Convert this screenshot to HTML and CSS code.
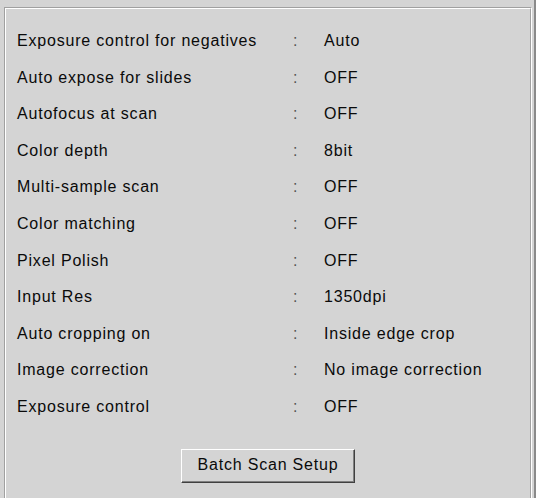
FILE: index.html
```html
<!DOCTYPE html>
<html>
<head>
<meta charset="utf-8">
<link rel="stylesheet" href="styles.css">
</head>
<body>
<div class="window">
  <div class="frame">
    <div class="frame-inner">
      <div class="rows">
        <div class="row"><span class="label">Exposure control for negatives</span><span class="colon">:</span><span class="value">Auto</span></div>
        <div class="row"><span class="label">Auto expose for slides</span><span class="colon">:</span><span class="value">OFF</span></div>
        <div class="row"><span class="label">Autofocus at scan</span><span class="colon">:</span><span class="value">OFF</span></div>
        <div class="row"><span class="label">Color depth</span><span class="colon">:</span><span class="value">8bit</span></div>
        <div class="row"><span class="label">Multi-sample scan</span><span class="colon">:</span><span class="value">OFF</span></div>
        <div class="row"><span class="label">Color matching</span><span class="colon">:</span><span class="value">OFF</span></div>
        <div class="row"><span class="label">Pixel Polish</span><span class="colon">:</span><span class="value">OFF</span></div>
        <div class="row"><span class="label">Input Res</span><span class="colon">:</span><span class="value">1350dpi</span></div>
        <div class="row"><span class="label">Auto cropping on</span><span class="colon">:</span><span class="value">Inside edge crop</span></div>
        <div class="row"><span class="label">Image correction</span><span class="colon">:</span><span class="value">No image correction</span></div>
        <div class="row"><span class="label">Exposure control</span><span class="colon">:</span><span class="value">OFF</span></div>
      </div>
      <div class="actions">
        <button class="btn" type="button">Batch Scan Setup</button>
      </div>
    </div>
  </div>
  <div class="edge"></div>
</div>
</body>
</html>
```

FILE: styles.css
```css
html, body {
  margin: 0;
  padding: 0;
  background: #d4d4d4;
  overflow: hidden;
}

body {
  font-family: "Liberation Sans", Arial, sans-serif;
  font-size: 16px;
  letter-spacing: 0.8px;
  color: #0a0a0a;
}

.window {
  display: flex;
  height: 498px;
  width: 537px;
}

.frame {
  margin: 7px 0 0 4px;
  width: 528px;
  height: 491px;
  box-sizing: border-box;
  border-top: 1px solid #a0a0a0;
  border-left: 1px solid #a0a0a0;
  border-right: 1px solid #ffffff;
  flex: none;
}

.frame-inner {
  height: 100%;
  box-sizing: border-box;
  border-top: 1px solid #ffffff;
  border-left: 1px solid #ffffff;
  border-right: 1px solid #a0a0a0;
  padding: 14px 11px 0 11px;
}

.rows {
  display: flex;
  flex-direction: column;
}

.row {
  display: grid;
  grid-template-columns: 276px 31px 1fr;
  height: 36.6px;
  line-height: 36.6px;
  white-space: nowrap;
}

.colon {
  color: #555;
}

.actions {
  display: flex;
  justify-content: center;
  margin-top: 23.4px;
}

.btn {
  width: 174px;
  height: 34px;
  box-sizing: border-box;
  background: #d4d4d4;
  font-family: "Liberation Sans", Arial, sans-serif;
  font-size: 16px;
  letter-spacing: 0.8px;
  color: #0a0a0a;
  border-top: 1px solid #ffffff;
  border-left: 1px solid #ffffff;
  border-right: 1px solid #404040;
  border-bottom: 1px solid #404040;
  box-shadow: inset -1px -1px 0 #808080;
  padding: 0 0 1px 0;
  margin: 0;
}

.edge {
  flex: none;
  width: 2px;
  margin-left: 2px;
  background: #8a8a8a;
  border-right: 1px solid #ffffff;
}
```
